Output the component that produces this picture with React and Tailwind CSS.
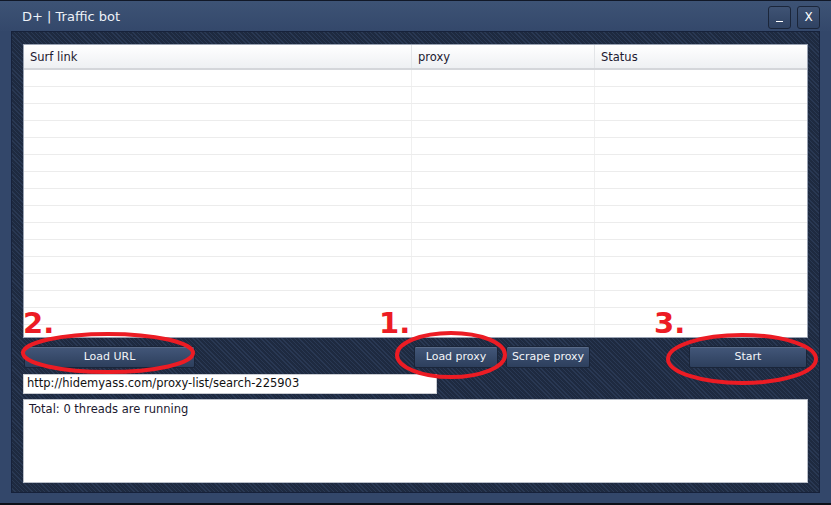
const hatch =
  'bg-[repeating-linear-gradient(45deg,#1e2a40_0px,#1e2a40_2px,#293853_2px,#293853_3px)]'

// ── Sub-components ──────────────────────────────────────
const WinButton = ({ children }) => (
  <div className="flex h-[23px] w-[23px] items-center justify-center rounded-[3px] border border-[#1b263a] bg-gradient-to-b from-[#3f5374] to-[#2f4262] text-[12px] leading-none text-white">
    {children}
  </div>
)

const Button = ({ children, className = '' }) => (
  <button
    className={`flex h-[22px] items-center justify-center rounded-[2px] border border-[#1a2539] bg-gradient-to-b from-[#435779] to-[#2d3f5d] text-[11px] text-[#f2f4f8] shadow-[inset_0_1px_0_rgba(255,255,255,0.12)] ${className}`}
  >
    {children}
  </button>
)

const columns = [
  { label: 'Surf link', w: 'w-[388px]' },
  { label: 'proxy', w: 'w-[183px]' },
  { label: 'Status', w: 'flex-1' },
]

// ── Main component ───────────────────────────────────────
export default function App() {
  return (
    <div
      className="relative flex h-[505px] w-[831px] flex-col overflow-hidden border-t border-b-2 border-t-[#111827] border-b-[#0b0f18] bg-[#33476a]"
      style={{ fontFamily: '"DejaVu Sans", Verdana, sans-serif' }}
    >
      {/* ── Title bar ── */}
      <div className="flex h-[30px] items-center justify-between bg-gradient-to-b from-[#3d5375] to-[#34486b] pl-[22px] pr-[11px]">
        <span className="pt-[2px] text-[13px] text-[#eef2f8]">D+ | Traffic bot</span>
        <div className="flex gap-[6px] pt-[2px]">
          <WinButton>
            <span className="mt-[8px] block h-[1px] w-[7px] bg-white" />
          </WinButton>
          <WinButton>X</WinButton>
        </div>
      </div>

      {/* ── Inner panel ── */}
      <div
        className={`mx-[11px] flex h-[462px] flex-col border border-[#16213a] ${hatch} pl-[11px] pr-[11px] pt-[12px]`}
      >
        {/* Table */}
        <div className="flex h-[294px] flex-col overflow-hidden border border-[#9aa3b3] bg-white">
          <div className="flex h-[25px] shrink-0 border-b-2 border-[#d4d6da] bg-gradient-to-b from-white to-[#eef0f3]">
            {columns.map((c, i) => (
              <div
                key={c.label}
                className={`${c.w} flex items-center pl-[6px] pt-[2px] text-[11.5px] text-[#1c1930] ${
                  i < 2 ? 'border-r border-[#e3e5e8]' : ''
                }`}
              >
                {c.label}
              </div>
            ))}
          </div>
          {Array.from({ length: 16 }).map((_, r) => (
            <div key={r} className="flex h-[17px] shrink-0 border-b border-[#ececec]">
              <div className="w-[388px] border-r border-[#f0f0f0]" />
              <div className="w-[183px] border-r border-[#f0f0f0]" />
              <div className="flex-1" />
            </div>
          ))}
        </div>

        {/* Buttons */}
        <div className="mt-[8px] flex items-center">
          <Button className="ml-[1px] w-[171px]">Load URL</Button>
          <Button className="ml-[219px] w-[84px]">Load proxy</Button>
          <Button className="ml-[8px] w-[84px]">Scrape proxy</Button>
          <Button className="ml-[99px] w-[118px]">Start</Button>
        </div>

        {/* URL input */}
        <div className="mt-[6px] flex h-[20px] w-[414px] items-center border border-[#c9ccd2] bg-white pl-[3px] text-[11.5px] text-[#111]">
          http://hidemyass.com/proxy-list/search-225903
        </div>

        {/* Log */}
        <div className="mt-[5px] h-[84px] border border-[#b9bec8] bg-white pl-[5px] pt-[1px] text-[11.5px] text-[#1c1930]">
          Total: 0 threads are running
        </div>
      </div>

      {/* ── Red annotations ── */}
      <svg className="pointer-events-none absolute left-0 top-0" width="831" height="505">
        <g fill="none" stroke="#ec1c24" strokeWidth="4">
          <ellipse cx="108" cy="352" rx="85" ry="19" />
          <ellipse cx="451" cy="354" rx="54" ry="22" />
          <ellipse cx="742" cy="358" rx="74" ry="24" />
        </g>
      </svg>
      <span className="absolute left-[23px] top-[308px] text-[29px] font-bold leading-none text-[#ec1c24]">2.</span>
      <span className="absolute left-[379px] top-[308px] text-[29px] font-bold leading-none text-[#ec1c24]">1.</span>
      <span className="absolute left-[654px] top-[308px] text-[29px] font-bold leading-none text-[#ec1c24]">3.</span>
    </div>
  )
}
